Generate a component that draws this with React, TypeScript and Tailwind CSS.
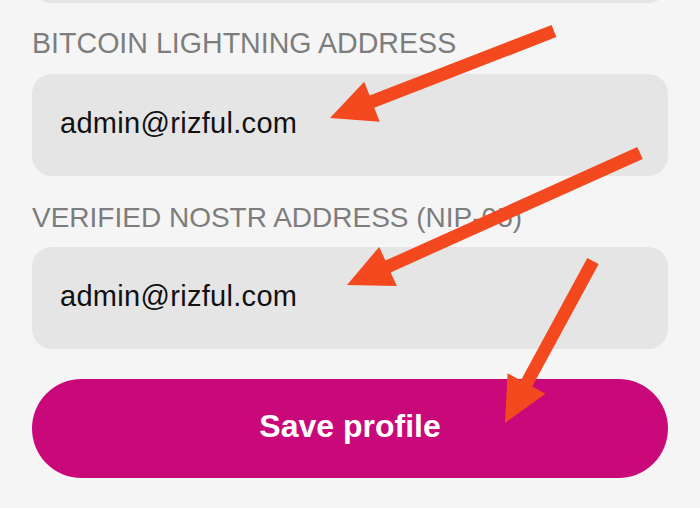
import React from "react";

type Pt = [number, number];

// builds a flat-tailed arrow polygon from tail to tip
function arrowPoints(tail: Pt, tip: Pt, shaft = 13, headLen = 45, headW = 43) {
  const dx = tail[0] - tip[0];
  const dy = tail[1] - tip[1];
  const len = Math.hypot(dx, dy);
  const ux = dx / len;
  const uy = dy / len;
  const nx = -uy;
  const ny = ux;
  const bx = tip[0] + ux * headLen;
  const by = tip[1] + uy * headLen;
  const s = shaft / 2;
  const h = headW / 2;
  const pts: Pt[] = [
    tip,
    [bx + nx * h, by + ny * h],
    [bx + nx * s, by + ny * s],
    [tail[0] + nx * s, tail[1] + ny * s],
    [tail[0] - nx * s, tail[1] - ny * s],
    [bx - nx * s, by - ny * s],
    [bx - nx * h, by - ny * h],
  ];
  return pts.map((p) => `${p[0].toFixed(1)},${p[1].toFixed(1)}`).join(" ");
}

const arrows: [Pt, Pt][] = [
  [[554, 31], [330, 118]],
  [[640, 153], [347, 285]],
  [[593, 261], [505, 423]],
];

function Field({ value }: { value: string }) {
  return (
    <div className="h-[102px] rounded-[20px] bg-[#e5e5e5] flex items-center pl-[28px] pb-[4px]">
      <span className="text-[29px] leading-[29px] text-[#111111] tracking-[0.3px]">{value}</span>
    </div>
  );
}

export default function App() {
  return (
    <div
      className="relative w-[700px] h-[508px] overflow-hidden bg-[#f5f5f5]"
      style={{ fontFamily: '"Liberation Sans", Arial, sans-serif' }}
    >
      <div className="flex flex-col px-[32px]">
        {/* previous field, scrolled mostly out of view */}
        <div className="h-[102px] -mt-[99px] rounded-[20px] bg-[#e5e5e5]" />

        <label className="mt-[25.5px] mb-[16.5px] text-[28.6px] leading-[29px] text-[#7d7d7d] uppercase">
          Bitcoin Lightning Address
        </label>
        <Field value="admin@rizful.com" />

        <label className="mt-[26.5px] mb-[15.5px] text-[28px] leading-[29px] text-[#7d7d7d] uppercase">
          Verified Nostr Address (NIP-05)
        </label>
        <Field value="admin@rizful.com" />

        <button className="mt-[30px] h-[99px] rounded-full bg-[#c9087a] text-white text-[32px] leading-[32px] font-bold pb-[5px]">
          Save profile
        </button>
      </div>

      {/* annotation arrows */}
      <svg className="absolute inset-0 pointer-events-none" width="700" height="508" viewBox="0 0 700 508">
        {arrows.map(([tail, tip], i) => (
          <polygon key={i} points={arrowPoints(tail, tip)} fill="#f4491f" />
        ))}
      </svg>
    </div>
  );
}
